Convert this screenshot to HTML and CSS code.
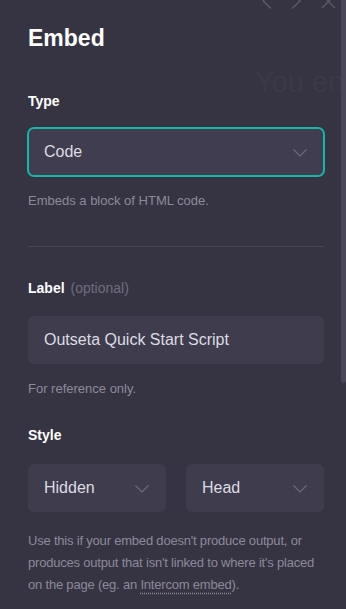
FILE: index.html
```html
<!DOCTYPE html>
<html>
<head>
    <meta charset="UTF-8">
    <title>Embed</title>
    <link rel="stylesheet" href="styles.css">
</head>
<body>
    <div class="frame">
        <div class="ghost">You end</div>

        <div class="nav">
            <svg width="10" height="16" viewBox="0 0 10 16"><polyline points="9,0.5 1,8 9,15.5" fill="none" stroke="#5e5c6e" stroke-width="1.2"/></svg>
            <svg width="10" height="16" viewBox="0 0 10 16"><polyline points="1,0.5 9,8 1,15.5" fill="none" stroke="#5e5c6e" stroke-width="1.2"/></svg>
            <svg width="15" height="15" viewBox="0 0 15 15"><path d="M1 1 L14 14 M14 1 L1 14" fill="none" stroke="#5e5c6e" stroke-width="1.2"/></svg>
        </div>

        <div class="panel">
            <h1>Embed</h1>

            <div class="label first">Type</div>
            <div class="select focus">
                <span>Code</span>
                <svg width="14" height="8" viewBox="0 0 14 8"><polyline points="0.5,0.5 7,7 13.5,0.5" fill="none" stroke="#6c6a7c" stroke-width="1.2"/></svg>
            </div>
            <p class="help">Embeds a block of HTML code.</p>

            <hr class="divider">

            <div class="label">Label <span class="optional">(optional)</span></div>
            <div class="input">Outseta Quick Start Script</div>
            <p class="help">For reference only.</p>

            <div class="label style-label">Style</div>
            <div class="row">
                <div class="select">
                    <span>Hidden</span>
                    <svg width="14" height="8" viewBox="0 0 14 8"><polyline points="0.5,0.5 7,7 13.5,0.5" fill="none" stroke="#6c6a7c" stroke-width="1.2"/></svg>
                </div>
                <div class="select">
                    <span>Head</span>
                    <svg width="14" height="8" viewBox="0 0 14 8"><polyline points="0.5,0.5 7,7 13.5,0.5" fill="none" stroke="#6c6a7c" stroke-width="1.2"/></svg>
                </div>
            </div>
            <p class="note">Use this if your embed doesn't produce output, or produces output that isn't linked to where it's placed on the page (eg. an <span class="dotted">Intercom embed</span>).</p>
        </div>

        <div class="scrollbar"><div class="thumb"></div></div>
    </div>
</body>
</html>
```

FILE: styles.css
```css
html, body {
    margin: 0;
    padding: 0;
    background: #363442;
}
body {
    font-family: "Liberation Sans", Arial, Helvetica, sans-serif;
    color: #ffffff;
    width: 346px;
    height: 609px;
    overflow: hidden;
}
.frame {
    position: relative;
    display: flex;
    height: 609px;
}
.ghost {
    position: absolute;
    left: 255px;
    top: 64px;
    width: 86px;
    overflow: hidden;
    font-size: 29px;
    line-height: 36px;
    color: #3b3948;
    white-space: nowrap;
}
.nav {
    position: absolute;
    top: -7px;
    left: 262px;
    display: flex;
    align-items: center;
    gap: 19px;
}
.nav svg:last-child {
    margin-left: 1px;
}
.panel {
    position: relative;
    width: 296px;
    padding: 24px 17px 0 28px;
}
h1 {
    margin: 0;
    font-size: 23px;
    line-height: 28px;
    font-weight: bold;
}
.label {
    margin-top: 32px;
    font-size: 14px;
    line-height: 18px;
    font-weight: bold;
}
.label.first {
    margin-top: 40px;
}
.label.style-label {
    margin-top: 28px;
}
.optional {
    margin-left: 2px;
    font-weight: normal;
    color: #6f6d7e;
}
.select {
    display: flex;
    justify-content: space-between;
    align-items: center;
    box-sizing: border-box;
    height: 48px;
    padding: 0 17px 0 16px;
    background: #3e3c4d;
    border-radius: 6px;
    font-size: 16px;
    color: #dddce3;
}
.select svg {
    margin-top: 1px;
}
.select.focus {
    margin-top: 18px;
    border: 1px solid #18b6a8;
    box-shadow: 0 0 0 1px #18b6a8;
    padding: 0 16px 0 15px;
    background: #3f3d4f;
}
.input {
    margin-top: 19px;
    box-sizing: border-box;
    height: 48px;
    padding: 0 16px;
    line-height: 48px;
    background: #3e3c4d;
    border-radius: 6px;
    font-size: 16px;
    color: #dddce3;
}
.help {
    margin: 16px 0 0;
    font-size: 13px;
    line-height: 18px;
    color: #8c8a99;
}
.divider {
    margin: 36px 0 0;
    border: 0;
    height: 1px;
    background: #464455;
}
.row {
    display: flex;
    gap: 20px;
    margin-top: 20px;
}
.row .select {
    flex: 1;
}
.note {
    margin: 18px 0 0;
    font-size: 13px;
    line-height: 22px;
    letter-spacing: -0.2px;
    color: #8c8a99;
}
.dotted {
    text-decoration: underline dotted #8c8a99;
    text-underline-offset: 4px;
}
.scrollbar {
    width: 5px;
    margin-left: auto;
    height: 609px;
}
.thumb {
    height: 383px;
    background: #4a4858;
    border-radius: 0 0 3px 3px;
}
```
